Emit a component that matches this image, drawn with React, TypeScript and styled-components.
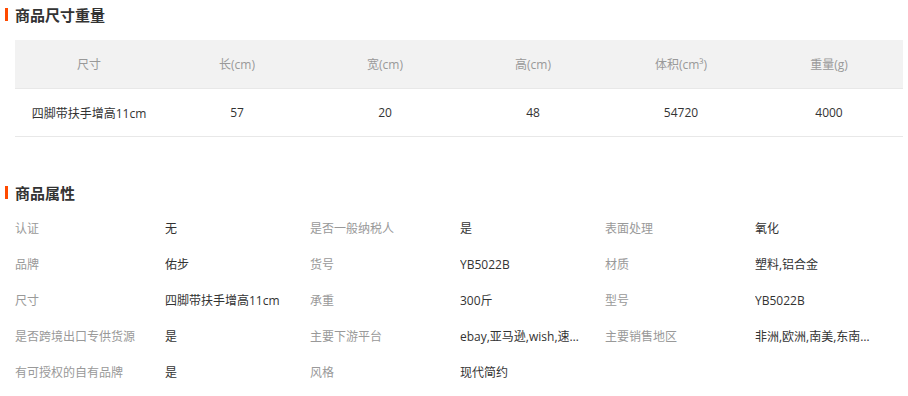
import React from "react";
import styled, { createGlobalStyle } from "styled-components";

const GlobalStyle = createGlobalStyle`
  html, body {
    margin: 0;
    padding: 0;
    background: #ffffff;
  }
  body {
    font-family: "Open Sans", "Noto Sans CJK SC", sans-serif;
    font-size: 12px;
    color: #333333;
  }
`;

const Page = styled.div`
  width: 908px;
  display: flex;
  flex-direction: column;
`;

const SectionTitle = styled.h2<{ $top: number }>`
  margin: ${(p) => p.$top}px 0 0 0;
  padding-left: 5px;
  height: 21px;
  display: flex;
  align-items: center;
  gap: 7px;
  font-size: 15px;
  font-weight: bold;
  color: #333333;
  font-family: "Noto Sans CJK SC", sans-serif;
`;

const Bar = styled.span`
  display: block;
  width: 3px;
  height: 13px;
  background: #ff4a00;
`;

const SizeTable = styled.table`
  margin: 15px 0 0 15px;
  width: 888px;
  border-collapse: collapse;
  table-layout: fixed;
`;

const HeadCell = styled.th`
  height: 48px;
  padding: 0;
  background: #f2f2f2;
  color: #999999;
  font-weight: normal;
  font-size: 12px;
  text-align: center;
  border-bottom: 1px solid #e8e8e8;
`;

const BodyCell = styled.td`
  height: 47px;
  padding: 0;
  color: #333333;
  font-size: 12px;
  text-align: center;
  border-bottom: 1px solid #e8e8e8;
`;

const AttrGrid = styled.div`
  margin: 7px 0 0 15px;
  display: grid;
  grid-template-columns: repeat(3, 150px 145px);
  grid-auto-rows: 36px;
`;

const AttrLabel = styled.div`
  display: flex;
  align-items: center;
  color: #999999;
  white-space: nowrap;
`;

const AttrValue = styled.div`
  display: flex;
  align-items: center;
  color: #333333;
  min-width: 0;
`;

const ValueText = styled.span`
  display: block;
  max-width: 120px;
  white-space: nowrap;
  overflow: hidden;
  text-overflow: ellipsis;
`;

const headers = ["尺寸", "长(cm)", "宽(cm)", "高(cm)", "体积(cm³)", "重量(g)"];
const row = ["四脚带扶手增高11cm", "57", "20", "48", "54720", "4000"];

const attrs: [string, string][] = [
  ["认证", "无"],
  ["是否一般纳税人", "是"],
  ["表面处理", "氧化"],
  ["品牌", "佑步"],
  ["货号", "YB5022B"],
  ["材质", "塑料,铝合金"],
  ["尺寸", "四脚带扶手增高11cm"],
  ["承重", "300斤"],
  ["型号", "YB5022B"],
  ["是否跨境出口专供货源", "是"],
  ["主要下游平台", "ebay,亚马逊,wish,速卖通,独立站"],
  ["主要销售地区", "非洲,欧洲,南美,东南亚,北美,中东"],
  ["有可授权的自有品牌", "是"],
  ["风格", "现代简约"],
];

export default function App() {
  return (
    <>
      <GlobalStyle />
      <Page>
        <SectionTitle $top={4}>
          <Bar />
          商品尺寸重量
        </SectionTitle>
        <SizeTable>
          <thead>
            <tr>
              {headers.map((h) => (
                <HeadCell key={h}>{h}</HeadCell>
              ))}
            </tr>
          </thead>
          <tbody>
            <tr>
              {row.map((c, i) => (
                <BodyCell key={i}>{c}</BodyCell>
              ))}
            </tr>
          </tbody>
        </SizeTable>
        <SectionTitle $top={45}>
          <Bar />
          商品属性
        </SectionTitle>
        <AttrGrid>
          {attrs.map(([k, v], i) => (
            <React.Fragment key={i}>
              <AttrLabel>{k}</AttrLabel>
              <AttrValue>
                <ValueText>{v}</ValueText>
              </AttrValue>
            </React.Fragment>
          ))}
        </AttrGrid>
      </Page>
    </>
  );
}
